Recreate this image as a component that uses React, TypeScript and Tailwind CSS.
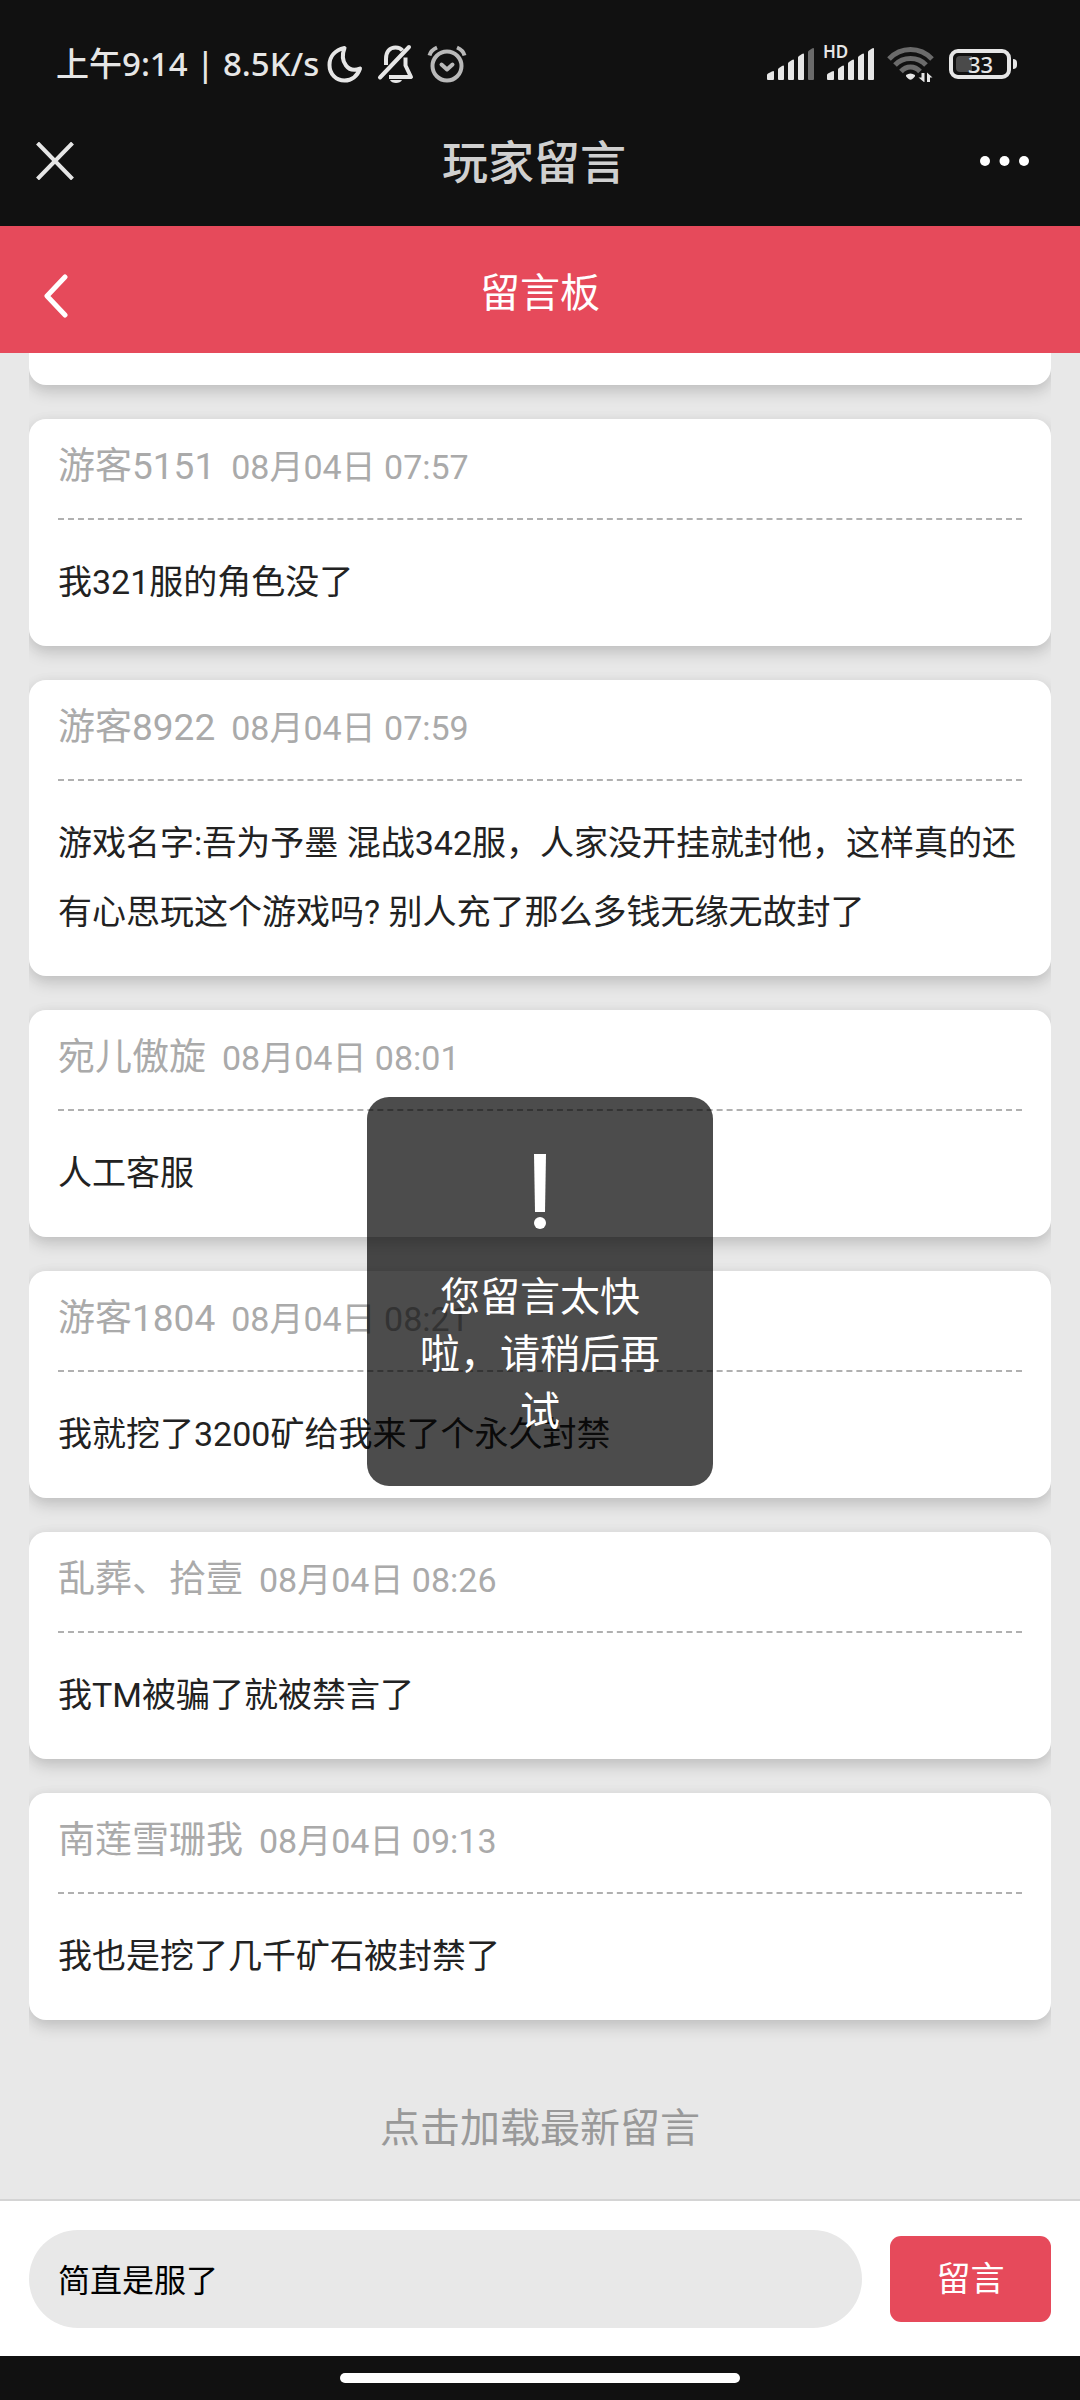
import { useState } from "react";

const messages = [
  { name: "游客5151", time: "08月04日 07:57", text: "我321服的角色没了" },
  {
    name: "游客8922",
    time: "08月04日 07:59",
    text: "游戏名字:吾为予墨 混战342服，人家没开挂就封他，这样真的还有心思玩这个游戏吗? 别人充了那么多钱无缘无故封了",
  },
  { name: "宛儿傲旋", time: "08月04日 08:01", text: "人工客服" },
  { name: "游客1804", time: "08月04日 08:21", text: "我就挖了3200矿给我来了个永久封禁" },
  { name: "乱葬、拾壹", time: "08月04日 08:26", text: "我TM被骗了就被禁言了" },
  { name: "南莲雪珊我", time: "08月04日 09:13", text: "我也是挖了几千矿石被封禁了" },
];

const SignalBars = ({ weak = false }: { weak?: boolean }) => (
  <svg width="48" height="32" viewBox="0 0 48 32" fill="#e6e6e6">
    <path d="M0 31v-4q0-1 1-1.500l4-2q2-1 2 .5v7q0 1-1 1h-5q-1 0-1-1z" />
    <path d="M11 21.500q0-1 1-1.500l3-2q2-1 2 .5v12.500q0 1-1 1h-4q-1 0-1-1z" />
    <path d="M21 15.500q0-1 1-1.500l3-2q2-1 2 .5v18.500q0 1-1 1h-4q-1 0-1-1z" />
    <path d="M31 9.500q0-1 1-1.500l3-2q2-1 2 .5v24.500q0 1-1 1h-4q-1 0-1-1z" />
    <path
      d="M41 4q0-1 1-1.500l3-2q2-1 2 .5v30q0 1-1 1h-4q-1 0-1-1z"
      fill={weak ? "#6b6b6b" : "#e6e6e6"}
    />
  </svg>
);

const StatusBar = () => (
  <div className="flex h-[96px] items-end justify-between pr-[63px] pl-14 text-[#e6e6e6]">
    <div className="flex h-16 items-center">
      <span className="font-['Noto_Sans','Noto_Sans_CJK_SC',sans-serif] text-[33px] leading-10 font-medium whitespace-nowrap">
        上午9:14 | 8.5K/s
      </span>

      {/* Do not disturb */}
      <svg className="ml-2" width="36" height="38" viewBox="0 0 36 38" fill="none">
        <path
          d="M17.500 3C8 5 2.500 11.500 2.500 20c0 9 6.500 15.500 15 15.500 7 0 13-4.500 15.500-12-6 2.500-11 1-14-3-3.500-4.500-4-11-1.500-17.500z"
          stroke="#e6e6e6"
          strokeWidth="4"
          strokeLinejoin="round"
        />
      </svg>

      {/* Muted bell */}
      <svg className="ml-3.5" width="38" height="40" viewBox="0 0 38 40" fill="none" stroke="#e6e6e6">
        <path d="M9 21v-6C9 7.500 13 3.500 18.500 3.500c3 0 5.500 1 7 3" strokeWidth="4" />
        <path d="M28.500 13.500v8L34 33H12" strokeWidth="4" strokeLinejoin="round" />
        <path d="M3 33.500L32 3" strokeWidth="4" strokeLinecap="round" />
        <path d="M13 36h12c-1.500 4-10.500 4-12 0z" fill="#e6e6e6" stroke="none" />
      </svg>

      {/* Alarm */}
      <svg className="ml-3" width="40" height="38" viewBox="0 0 40 38" fill="none" stroke="#b9b9b9" strokeWidth="4">
        <circle cx="20" cy="21" r="14.500" />
        <path d="M14.500 19.500l5.500 5 5.500-5" strokeLinecap="round" strokeLinejoin="round" />
        <path d="M2.500 10.500Q4 5 10 2.500M37.500 10.500Q36 5 30 2.500" />
      </svg>
    </div>

    <div className="flex h-16 items-center">
      <SignalBars weak />
      <div className="relative ml-3 flex">
        <SignalBars />
        <span className="absolute -top-1.5 -left-1 font-['Noto_Sans',sans-serif] text-[17px] leading-5 font-semibold">
          HD
        </span>
      </div>

      <svg className="ml-3" width="48" height="36" viewBox="0 0 48 36" fill="none">
        <g stroke="#6b6b6b" strokeWidth="5">
          <path d="M2 13Q11 3.500 23.500 3.500T45 13" />
          <path d="M8 19Q14 12.500 23.500 12.500T39 19" />
          <path d="M14 25.500Q18 21 23.500 21T33 25.500" />
        </g>
        <path d="M19 29Q23.500 26 28 29q.5 1.500-1.500 3-3 3.500-6 0-2-1.500-1.500-3z" fill="#e6e6e6" />
        <path d="M37.500 27v9.500l-6-5h3V27zM40 36v-9.500l5.500 5h-2.500V36z" fill="#e6e6e6" />
      </svg>

      <div className="ml-3.5 flex items-center gap-0.5">
        <div className="flex h-[30px] w-[62px] items-center rounded-[9px] border-4 border-[#e6e6e6] pl-[3px]">
          <div className="h-4 w-4 rounded-l-sm bg-[#4a4a4a]" />
          <span className="-ml-1 font-['Noto_Sans',sans-serif] text-[22px] leading-6 font-medium">33</span>
        </div>
        <div className="h-2.5 w-1 rounded-r-full bg-[#e6e6e6]" />
      </div>
    </div>
  </div>
);

const AppBar = () => (
  <header className="flex h-[130px] items-center justify-between px-9">
    <button type="button" aria-label="关闭" className="w-[68px]">
      <svg width="38" height="38" viewBox="0 0 38 38" stroke="#e6e6e6" strokeWidth="4">
        <path d="M1.500 1l35 36M36.500 1l-35 36" />
      </svg>
    </button>
    <h1 className="pt-1 text-[46px] leading-14 font-medium text-[#d0d0d0]">玩家留言</h1>
    <button type="button" aria-label="更多" className="flex w-20 justify-end pr-3.5">
      <svg width="50" height="10" viewBox="0 0 50 10" fill="#fff">
        <circle cx="5" cy="5" r="5" />
        <circle cx="24.500" cy="5" r="5" />
        <circle cx="44" cy="5" r="5" />
      </svg>
    </button>
  </header>
);

const cardClass = "rounded-[17px] bg-white shadow-[0_7px_16px_rgba(0,0,0,0.15),0_2px_14px_rgba(0,0,0,0.05)]";

const App = () => {
  const [draft, setDraft] = useState("简直是服了");

  return (
    <div className="flex min-h-screen flex-col bg-[#111] font-['Roboto','Noto_Sans_CJK_SC',sans-serif]">
      <StatusBar />
      <AppBar />

      <div className="relative flex flex-1 flex-col bg-[#e8e8e8]">
        <div className="grid h-[127px] grid-cols-[80px_1fr_80px] items-center bg-[#e64a5b] text-white">
          <button type="button" aria-label="返回" className="mt-3 pl-[42px]">
            <svg width="28" height="44" viewBox="0 0 28 44" fill="none" stroke="#fff" strokeWidth="5">
              <path d="M23 3L5 22l18 19" strokeLinecap="round" strokeLinejoin="round" />
            </svg>
          </button>
          <h2 className="pt-2 text-center text-[40px] leading-14">留言板</h2>
        </div>

        <main className="flex-1">
          {/* Shadows are clipped at the sides of the list */}
          <ul className="mx-[29px] space-y-[34px] overflow-hidden pb-[34px]">
            <li className={`h-8 rounded-t-none! ${cardClass}`} />
            {messages.map((item) => (
              <li key={item.name} className={`px-[29px] pb-[29px] ${cardClass}`}>
                <div className="flex items-center gap-4 border-b-2 border-dashed border-[#b0b0b0] pt-[29px] pb-8 text-[#aaa]">
                  <span className="text-[37px] leading-[38px]">{item.name}</span>
                  <time className="text-[34px] leading-[38px]">{item.time}</time>
                </div>
                <p className="pt-7 text-[34px] leading-[69px] text-[#222]">{item.text}</p>
              </li>
            ))}
          </ul>

          <div className="pt-[47px] pb-[42px] text-center">
            <button type="button" className="text-[40px] leading-14 text-[#999]">
              点击加载最新留言
            </button>
          </div>
        </main>

        <form
          className="flex items-center gap-7 border-t-2 border-[#d4d4d4] bg-white px-[29px] pt-[29px] pb-7"
          onSubmit={(e) => e.preventDefault()}
        >
          <input
            type="text"
            aria-label="留言内容"
            value={draft}
            onChange={(e) => setDraft(e.target.value)}
            className="h-[98px] min-w-0 flex-1 rounded-full bg-[#e8e8e8] px-[29px] pb-0.5 text-[32px] text-black outline-none"
          />
          <button type="submit" className="h-[86px] w-[161px] rounded-[11px] bg-[#e64a5b] text-[34px] text-white">
            留言
          </button>
        </form>

        {/* Toast */}
        <div className="pointer-events-none absolute inset-0 flex items-center justify-center">
          <div
            role="alert"
            className="flex w-[346px] flex-col items-center rounded-[22px] bg-black/70 px-11 pt-[57px] pb-[46px] text-white"
          >
            <svg width="12" height="75" viewBox="0 0 12 75" fill="#fff">
              <path d="M0 0h12l-1 58H1z" />
              <circle cx="6" cy="69" r="6" />
            </svg>
            <p className="mt-10 text-center text-[40px] leading-[57px]">您留言太快啦，请稍后再试</p>
          </div>
        </div>
      </div>

      {/* Gesture bar */}
      <div className="flex h-11 items-center justify-center">
        <div className="h-2.5 w-[400px] rounded-full bg-white" />
      </div>
    </div>
  );
};

export default App;
